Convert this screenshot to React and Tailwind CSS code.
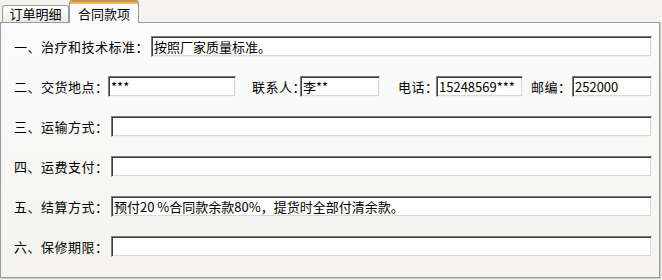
const font = { fontFamily: '"Noto Sans CJK SC", "Liberation Sans", sans-serif' };

function Field({ className = "", value = "" }) {
  return (
    <input
      readOnly
      value={value}
      className={`h-[21px] border border-t-[#7b7b7b] border-l-[#7b7b7b] border-b-[#f4f3ee] border-r-[#f4f3ee] bg-white pl-[2px] text-[13px] text-black shadow-[inset_1px_1px_0_#404040,inset_-1px_-1px_0_#dcdad2] outline-none ${className}`}
      style={font}
    />
  );
}

function Label({ w, className = "", children }) {
  return (
    <span className={`shrink-0 whitespace-nowrap text-[13px] tracking-[0.5px] ${w} ${className}`}>
      {children}
    </span>
  );
}

export default function App() {
  return (
    <div className="h-[280px] w-[662px] bg-[#f4f3ee] text-black" style={font}>
      {/* tab strip */}
      <div className="flex h-[22px] items-end pl-[2px]">
        <div className="flex h-[17px] w-[67px] items-center justify-center rounded-t-[3px] border border-b-0 border-[#919b9c] bg-gradient-to-b from-white to-[#ecebe6] text-[13px]">
          订单明细
        </div>
        <div className="relative z-10 -mb-px flex h-[23px] w-[70px] flex-col rounded-t-[3px] border border-b-0 border-[#919b9c] bg-[#fcfcfe]">
          <div className="h-[3px] rounded-t-[2px] bg-gradient-to-b from-[#e68b2c] to-[#ffc83c]" />
          <div className="flex flex-1 items-center justify-center text-[13px]">合同款项</div>
        </div>
      </div>

      {/* panel */}
      <div className="flex h-[256px] w-[660px] flex-col gap-[19px] border border-[#919b9c] bg-gradient-to-b from-[#fcfcfe] to-[#f4f3ee] pl-[13px] pr-[7px] pt-[13px] shadow-[1px_1px_0_#d0cec4]">
        <div className="flex h-[21px] items-center">
          <Label w="w-[137px]">一、治疗和技术标准：</Label>
          <Field className="flex-1" value="按照厂家质量标准。" />
        </div>

        <div className="flex h-[21px] items-center">
          <Label w="w-[94px]">二、交货地点：</Label>
          <Field className="w-[128px]" value="***" />
          <Label w="w-[48px]" className="ml-[16px]">联系人：</Label>
          <Field className="w-[80px]" value="李**" />
          <Label w="w-[38px]" className="ml-[18px]">电话：</Label>
          <Field className="w-[87px]" value="15248569***" />
          <Label w="w-[41px]" className="ml-[8px]">邮编：</Label>
          <Field className="min-w-0 flex-1" value="252000" />
        </div>

        <div className="flex h-[21px] items-center">
          <Label w="w-[97px]">三、运输方式：</Label>
          <Field className="flex-1" />
        </div>

        <div className="flex h-[21px] items-center">
          <Label w="w-[97px]">四、运费支付：</Label>
          <Field className="flex-1" />
        </div>

        <div className="flex h-[21px] items-center">
          <Label w="w-[97px]">五、结算方式：</Label>
          <Field className="flex-1" value="预付20 %合同款余款80%，提货时全部付清余款。" />
        </div>

        <div className="flex h-[21px] items-center">
          <Label w="w-[97px]">六、保修期限：</Label>
          <Field className="flex-1" />
        </div>
      </div>
    </div>
  );
}
